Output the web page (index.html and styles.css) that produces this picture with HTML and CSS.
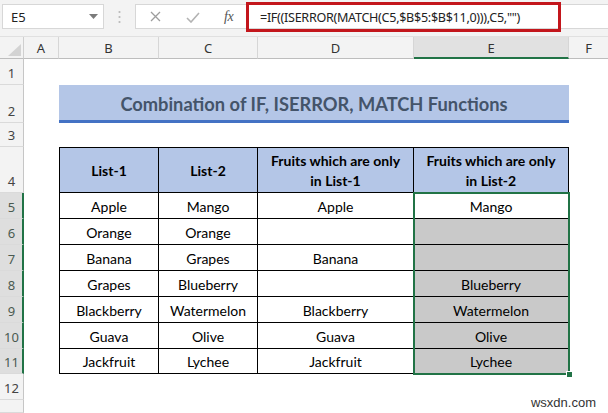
FILE: index.html
```html
<!DOCTYPE html>
<html>
<head>
<meta charset="utf-8">
<link rel="stylesheet" href="styles.css">
</head>
<body>
<div class="app">
  <div class="topbar">
    <div class="namebox"><span>E5</span>
      <svg width="9" height="5" viewBox="0 0 9 5"><path d="M0 0H9L4.5 5Z" fill="#7b7b7b"/></svg>
    </div>
    <div class="dots">
      <svg width="3" height="14" viewBox="0 0 3 14"><circle cx="1.5" cy="2" r="1.1" fill="#b9b9b9"/><circle cx="1.5" cy="7" r="1.1" fill="#b9b9b9"/><circle cx="1.5" cy="12" r="1.1" fill="#b9b9b9"/></svg>
    </div>
    <div class="fxbox">
      <svg class="ico-x" width="11" height="11" viewBox="0 0 11 11"><path d="M1 1L10 10M10 1L1 10" stroke="#9d9d9d" stroke-width="1.3" fill="none"/></svg>
      <svg class="ico-ok" width="14" height="11" viewBox="0 0 14 11"><path d="M1 6L5 10L13 1" stroke="#b3b3b3" stroke-width="1.6" fill="none"/></svg>
      <span class="fx">fx</span>
    </div>
    <div class="formula">
      <div class="formula-hl">=IF((ISERROR(MATCH(C5,$B$5:$B$11,0))),C5,"")</div>
    </div>
  </div>

  <div class="sheet">
    <!-- column headers -->
    <div class="corner"><svg width="24" height="22" viewBox="0 0 24 22"><path d="M21 7V19H8Z" fill="#d3d3d3"/></svg></div>
    <div class="ch">A</div>
    <div class="ch">B</div>
    <div class="ch">C</div>
    <div class="ch">D</div>
    <div class="ch ch-sel">E</div>
    <div class="ch ch-f">F</div>

    <!-- row 1 -->
    <div class="rh">1</div><div class="blank span6"></div>
    <!-- row 2 -->
    <div class="rh">2</div><div class="blank"></div>
    <div class="title">Combination of IF, ISERROR, MATCH Functions</div>
    <div class="blank"></div>
    <!-- row 3 -->
    <div class="rh">3</div><div class="blank span6"></div>
    <!-- row 4 -->
    <div class="rh">4</div><div class="blank"></div>
    <div class="cell th first">List-1</div>
    <div class="cell th">List-2</div>
    <div class="cell th">Fruits which are only in List-1</div>
    <div class="cell th">Fruits which are only in List-2</div>
    <div class="blank"></div>
    <!-- row 5 -->
    <div class="rh rh-sel">5</div><div class="blank"></div>
    <div class="cell first">Apple</div><div class="cell">Mango</div><div class="cell">Apple</div><div class="cell">Mango</div>
    <div class="blank"></div>
    <!-- row 6 -->
    <div class="rh rh-sel">6</div><div class="blank"></div>
    <div class="cell first">Orange</div><div class="cell">Orange</div><div class="cell"></div><div class="cell shade"></div>
    <div class="blank"></div>
    <!-- row 7 -->
    <div class="rh rh-sel">7</div><div class="blank"></div>
    <div class="cell first">Banana</div><div class="cell">Grapes</div><div class="cell">Banana</div><div class="cell shade"></div>
    <div class="blank"></div>
    <!-- row 8 -->
    <div class="rh rh-sel">8</div><div class="blank"></div>
    <div class="cell first">Grapes</div><div class="cell">Blueberry</div><div class="cell"></div><div class="cell shade">Blueberry</div>
    <div class="blank"></div>
    <!-- row 9 -->
    <div class="rh rh-sel">9</div><div class="blank"></div>
    <div class="cell first">Blackberry</div><div class="cell">Watermelon</div><div class="cell">Blackberry</div><div class="cell shade">Watermelon</div>
    <div class="blank"></div>
    <!-- row 10 -->
    <div class="rh rh-sel">10</div><div class="blank"></div>
    <div class="cell first">Guava</div><div class="cell">Olive</div><div class="cell">Guava</div><div class="cell shade">Olive</div>
    <div class="blank"></div>
    <!-- row 11 -->
    <div class="rh rh-sel">11</div><div class="blank"></div>
    <div class="cell first">Jackfruit</div><div class="cell">Lychee</div><div class="cell">Jackfruit</div><div class="cell shade">Lychee</div>
    <div class="blank"></div>
    <!-- row 12 -->
    <div class="rh">12</div><div class="blank span6"></div>
    <!-- row 13 -->
    <div class="rh"></div><div class="blank span6"></div>

    <div class="selection"><span class="handle"></span></div>
  </div>

  <div class="watermark">wsxdn.com</div>
</div>
</body>
</html>
```

FILE: styles.css
```css
* { box-sizing: border-box; }
html, body { margin: 0; padding: 0; }
body {
  width: 608px;
  height: 413px;
  overflow: hidden;
  background: #fff;
  font-family: "Noto Sans", "Open Sans", sans-serif;
}
.app {
  position: relative;
  width: 608px;
  height: 413px;
  display: flex;
  flex-direction: column;
}

/* ---------- formula bar ---------- */
.topbar {
  height: 37px;
  flex: none;
  background: #f3f3f3;
  display: flex;
  align-items: flex-start;
  padding-top: 4px;
  border-bottom: 1px solid #e0e0e0;
}
.namebox {
  margin-left: 2px;
  width: 102px;
  height: 25px;
  background: #fff;
  border: 1px solid #d7d7d7;
  display: flex;
  align-items: center;
  justify-content: space-between;
  padding: 0 5px 0 8px;
  font-size: 13px;
  color: #222;
}
.dots {
  width: 31px;
  height: 25px;
  display: flex;
  align-items: center;
  justify-content: center;
}
.fxbox {
  width: 110px;
  height: 25px;
  background: #fff;
  border: 1px solid #d7d7d7;
  border-right: none;
  display: flex;
  align-items: center;
  padding-left: 14px;
}
.ico-x { margin-right: 25px; }
.ico-ok { margin-right: 24px; margin-top: 1px; }
.fx {
  font-family: "Liberation Serif", serif;
  font-style: italic;
  font-size: 14px;
  color: #555;
  letter-spacing: -0.5px;
}
.formula {
  flex: 1;
  height: 25px;
  background: #fff;
  border-top: 1px solid #d7d7d7;
  border-bottom: 1px solid #d7d7d7;
  padding-left: 1px;
}
.formula-hl {
  width: 315px;
  height: 30px;
  margin-top: -3px;
  border: 3px solid #c3161c;
  padding-left: 11px;
  display: flex;
  align-items: center;
  font-size: 12.6px;
  color: #222;
  white-space: nowrap;
  letter-spacing: -0.3px;
}

/* ---------- sheet grid ---------- */
.sheet {
  position: relative;
  flex: 1;
  display: grid;
  grid-template-columns: 24px 35px 100px 99px 156px 155px 1fr;
  grid-template-rows: 22px 26px 38px 24px 46px 26px 26px 26px 26px 26px 26px 25px 26px 1fr;
}
.corner {
  background: #f3f3f3;
  border-right: 1px solid #cfcfcf;
  border-bottom: 1px solid #bdbdbd;
}
.corner svg { display: block; }
.ch {
  background: #f3f3f3;
  border-right: 1px solid #d6d6d6;
  border-bottom: 1px solid #bdbdbd;
  display: flex;
  align-items: center;
  justify-content: center;
  font-size: 13px;
  color: #333;
}
.ch-sel {
  background: #e1e1e1;
  border-bottom: 2px solid #217346;
  padding-top: 1px;
}
.ch-f { border-right: none; }
.rh {
  background: #f3f3f3;
  border-right: 1px solid #c6c6c6;
  border-bottom: 1px solid #dadada;
  display: flex;
  align-items: flex-end;
  justify-content: center;
  padding-bottom: 2px;
  font-size: 13px;
  line-height: 17px;
  color: #444;
}
.rh-sel {
  background: #dedede;
  border-right: 2px solid #217346;
  padding-left: 1px;
  color: #4a5a50;
}
.blank { background: #fff; }
.span6 { grid-column: span 6; }

.title {
  grid-column: span 4;
  background: #b4c6e7;
  border-bottom: 3px solid #4472c4;
  display: flex;
  align-items: center;
  justify-content: center;
  padding-top: 2px;
  font-family: Lato, "Open Sans", sans-serif;
  font-weight: 700;
  font-size: 18.3px;
  color: #44546a;
}

.cell {
  border-right: 1px solid #000;
  border-bottom: 1px solid #000;
  display: flex;
  align-items: center;
  justify-content: center;
  text-align: center;
  font-family: Lato, "Open Sans", sans-serif;
  font-size: 14px;
  color: #000;
  padding-top: 1px;
}
.cell.first { border-left: 1px solid #000; }
.th {
  border-top: 1px solid #000;
  background: #b4c6e7;
  font-weight: 700;
  line-height: 20px;
  padding: 1px 6px 0;
}
.shade { background: #c9c9c9; }

.selection {
  position: absolute;
  grid-column: 6 / 7;
  grid-row: 6 / 13;
  top: -1px;
  left: -1px;
  right: -1px;
  bottom: -1px;
  border: 2px solid #217346;
  pointer-events: none;
}
.handle {
  position: absolute;
  right: -5px;
  bottom: -5px;
  width: 7px;
  height: 7px;
  background: #217346;
  border: 1px solid #fff;
}

.watermark {
  position: absolute;
  right: 12px;
  bottom: 3px;
  font-family: "Liberation Sans", Arial, sans-serif;
  font-size: 13px;
  color: #333;
}
```
